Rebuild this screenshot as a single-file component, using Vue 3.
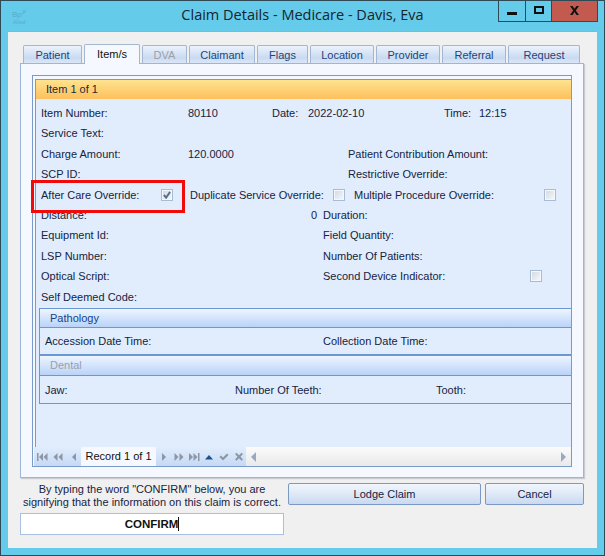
<script setup>
const tabs = [
  { name: 'Patient', w: 59 },
  { name: 'Item/s', w: 56, active: true },
  { name: 'DVA', w: 45, off: true },
  { name: 'Claimant', w: 66 },
  { name: 'Flags', w: 51 },
  { name: 'Location', w: 64 },
  { name: 'Provider', w: 64 },
  { name: 'Referral', w: 64 },
  { name: 'Request', w: 72 }
]

// iconos de la barra de navegacion
const navLeft = [
  { d: 'M0 1h1.500v8H0zM6 1v8L2 5zM10.500 1v8L6.500 5z', w: 11 },
  { d: 'M4.500 1v8L.5 5zM9.500 1v8L5.500 5z', w: 11 },
  { d: 'M7 1v8L3 5z', w: 8 }
]
const navRight = [
  { d: 'M1 1v8l4-4z', w: 8, c: '#8c96a6' },
  { d: 'M.5 1v8l4-4zM5.500 1v8l4-4z', w: 10, c: '#8c96a6' },
  { d: 'M0 1v8l4-4zM4.500 1v8l4-4zM9 1h1.500v8H9z', w: 11, c: '#8c96a6' },
  { d: 'M0 7.500 4 3l4 4.500z', w: 9, c: '#1f4f8f' },
  { d: 'M.5 5 2 3.500l2 2L8 1.500 9.500 3 4 8.500z', w: 10, c: '#8c96a6' },
  { d: 'M1 2 2.500.8 5 3.300 7.500.8 9 2 6.500 4.800 9 7.500 7.500 8.800 5 6.300 2.500 8.800 1 7.500 3.500 4.800z', w: 11, c: '#8c96a6' }
]
</script>

<template>
  <div class="ventana">
    <div class="titulo">
      <div class="logo">
        <svg width="10" height="8" viewBox="0 0 14 9"><path d="M2 8C5 7 6 4 6 1c1 2 3 2 6 1-2 1-3 2-4 4-1 1-3 2-6 2z" fill="#5aa9c4" /></svg>
        <span class="logo-bp">Bp</span>
        <span class="logo-allied">Allied</span>
      </div>
      <span class="titulo-texto">Claim Details - Medicare - Davis, Eva</span>
      <div class="caption">
        <div class="cap cap-min"><i></i></div>
        <div class="cap cap-max"><i></i></div>
        <div class="cap cap-close">
          <svg width="11" height="9" viewBox="0 0 11 9"><path d="M1 0h2.500L5.500 2.700 7.500 0H10L6.800 4.400 10 9H7.500L5.500 6.100 3.500 9H1L4.200 4.400z" fill="#111" /></svg>
        </div>
      </div>
    </div>

    <div class="cliente">
      <div class="tabs">
        <div
          v-for="t in tabs"
          :key="t.name"
          class="tab"
          :class="{ activa: t.active, apagada: t.off }"
          :style="{ width: t.w + 'px' }"
        >{{ t.name }}</div>
      </div>

      <div class="pagina">
        <div class="grupo">
          <div class="interior">
            <div class="item-head">Item 1 of 1</div>

            <div class="filas">
              <div class="fila f-item">
                <span>Item Number:</span><span>80110</span><span>Date:</span><span>2022-02-10</span><span>Time:</span><span>12:15</span>
              </div>
              <div class="fila"><span>Service Text:</span></div>
              <div class="fila f-carga">
                <span>Charge Amount:</span><span>120.0000</span><span>Patient Contribution Amount:</span>
              </div>
              <div class="fila f-scp"><span>SCP ID:</span><span>Restrictive Override:</span></div>
              <div class="fila f-over">
                <span>After Care Override:</span><span class="check"><svg width="8" height="8" viewBox="0 0 9 9"><path d="M1 4.500 3.500 7.500 8 1" fill="none" stroke="#5b6f8f" stroke-width="2.200" /></svg></span>
                <span>Duplicate Service Override:</span><span class="check"></span>
                <span>Multiple Procedure Override:</span><span class="check"></span>
                <div class="marca"></div>
              </div>
              <div class="fila f-dos"><span class="distancia"><span>Distance:</span><span>0</span></span><span>Duration:</span></div>
              <div class="fila f-dos"><span>Equipment Id:</span><span>Field Quantity:</span></div>
              <div class="fila f-dos"><span>LSP Number:</span><span>Number Of Patients:</span></div>
              <div class="fila f-optica"><span>Optical Script:</span><span>Second Device Indicator:</span><span class="check"></span></div>
              <div class="fila"><span>Self Deemed Code:</span></div>
            </div>

            <div class="sub">
              <div class="sub-head">Pathology</div>
              <div class="sub-body f-pato"><span>Accession Date Time:</span><span>Collection Date Time:</span></div>
              <div class="sub-head dental">Dental</div>
              <div class="sub-body f-dental"><span>Jaw:</span><span>Number Of Teeth:</span><span>Tooth:</span></div>
            </div>

            <div class="relleno"></div>

            <div class="nav">
              <div class="nav-botones">
                <svg v-for="n in navLeft" :key="n.d" class="nav-ico" :width="n.w" height="10" :viewBox="`0 0 ${n.w} 10`"><path :d="n.d" fill="#8c96a6" /></svg>
                <div class="record">Record 1 of 1</div>
                <svg v-for="n in navRight" :key="n.d" class="nav-ico" :width="n.w" height="10" :viewBox="`0 0 ${n.w} 10`"><path :d="n.d" :fill="n.c" /></svg>
              </div>
              <div class="scroll">
                <svg width="7" height="10" viewBox="0 0 7 10"><path d="M6 0v10L1 5z" fill="#9aa8c4" /></svg>
                <svg width="7" height="10" viewBox="0 0 7 10"><path d="M1 0v10l5-5z" fill="#9aa8c4" /></svg>
              </div>
            </div>
          </div>
        </div>
      </div>

      <div class="pie">
        <div class="confirmar">
          <p>By typing the word "CONFIRM" below, you are<br>signifying that the information on this claim is correct.</p>
          <div class="entrada"><b>CONFIRM</b><i class="cursor"></i></div>
        </div>
        <button class="boton">Lodge Claim</button>
        <button class="boton">Cancel</button>
      </div>
    </div>
  </div>
</template>

<style>
html, body { margin: 0; padding: 0; }
</style>

<style scoped>
.ventana { position: relative; box-sizing: border-box; width: 605px; height: 556px; background: #65cbea; border: 1px solid #2f4a56; padding: 0 7px 7px; display: flex; flex-direction: column; font-family: "Liberation Sans", "Noto Sans", sans-serif; font-size: 11px; color: #16233f; }

.titulo { height: 30px; flex: none; display: flex; align-items: center; justify-content: center; }
.titulo-texto { font-family: "Open Sans", sans-serif; font-size: 14.5px; color: #14252e; margin-top: -3px; }
.logo { position: absolute; left: 11px; top: 6px; width: 16px; height: 18px; opacity: .55; }
.logo svg { position: absolute; left: 7px; top: 1px; }
.logo-bp { position: absolute; left: 0; top: 3px; font-size: 8px; color: #4e94b3; }
.logo-allied { position: absolute; left: 1px; top: 12px; font-size: 5px; color: #4e94b3; }

.caption { position: absolute; top: -1px; right: 6px; display: flex; height: 22px; }
.cap { box-sizing: border-box; height: 22px; border: 1px solid #2f4a56; border-left: 0; display: flex; align-items: center; justify-content: center; }
.cap-min { width: 28px; border-left: 1px solid #2f4a56; }
.cap-min i { width: 10px; height: 3px; background: #111; margin-top: 4px; }
.cap-max { width: 26px; }
.cap-max i { box-sizing: border-box; width: 10px; height: 8px; border: 2px solid #111; margin-top: -2px; }
.cap-close { width: 46px; background: #c35a50; }
.cap-close svg { margin-top: -2px; }

.cliente { flex: 1; background: #f0f0f0; border-top: 1px solid #8fb0cf; padding: 11px 13px 0 12px; min-height: 0; display: flex; flex-direction: column; }

.tabs { display: flex; gap: 2px; height: 20px; padding-left: 3px; align-items: flex-end; }
.tab { box-sizing: border-box; height: 18px; border: 1px solid #a3b6d3; border-bottom: 0; border-radius: 2px 2px 0 0; background: linear-gradient(#ecf3fc, #c9daf1 70%, #dbe7f8); color: #1f4479; text-align: center; line-height: 18px; }
.tab.activa { height: 20px; background: #f5f8ff; color: #111; line-height: 18px; position: relative; margin-bottom: -1px; z-index: 1; }
.tab.apagada { color: #9a9fa8; }

.pagina { box-sizing: border-box; height: 415px; flex: none; background: #f5f8ff; border: 1px solid #9db6d8; box-shadow: 1px 1px 1px #c8cbd0; padding: 11px 11px 10px 11px; }
.grupo { box-sizing: border-box; height: 100%; border: 1px solid #7a9bc9; padding: 3px 0 0 2px; }
.interior { box-sizing: border-box; height: 100%; border: 1px solid #7a9bc9; border-width: 1px 0 0 1px; display: flex; flex-direction: column; }

.item-head { height: 19px; flex: none; box-sizing: border-box; background: linear-gradient(#ffe38f, #fcc05c); padding-left: 10px; line-height: 18px; color: #22283a; }

.filas { background: #e1edfd; padding: 3.9px 0 0 5px; flex: none; height: 209px; box-sizing: border-box; }
.fila { height: 20.4px; display: grid; align-items: center; white-space: nowrap; grid-template-columns: 1fr; position: relative; }
.f-item { grid-template-columns: 147px 84px 36px 136px 35px 1fr; }
.f-carga { grid-template-columns: 147px 160px 1fr; }
.f-scp { grid-template-columns: 307px 1fr; }
.f-over { grid-template-columns: 120px 29px 143px 21px 190px 1fr; }
.f-dos { grid-template-columns: 282px 1fr; }
.f-optica { grid-template-columns: 282px 207px 1fr; }
.distancia { display: flex; justify-content: space-between; padding-right: 6px; }

.check { box-sizing: border-box; width: 12px; height: 12px; border: 1px solid #a9bcd6; box-shadow: inset 0 0 0 1px #f4f7fb; background: linear-gradient(135deg, #d2d8e2, #f7f9fc); display: flex; align-items: center; justify-content: center; }
.marca { position: absolute; left: -10px; top: -4.500px; width: 154px; height: 33px; box-sizing: border-box; border: 3px solid #f00a0a; z-index: 2; }

.sub { background: #e1edfd; padding-left: 3px; flex: none; }
.sub-head { height: 20px; box-sizing: border-box; border: 1px solid #6a97d5; border-width: 1px 0 1px 1px; background: linear-gradient(#eef5ff, #b9d3f8); padding-left: 10px; line-height: 18px; color: #15428b; }
.sub-head.dental { color: #9a9fa8; border-top: 0; }
.sub-body { display: grid; align-items: center; box-sizing: border-box; border-left: 1px solid #6a97d5; border-bottom: 1px solid #6a97d5; padding-left: 5px; white-space: nowrap; }
.f-pato { height: 28px; border-bottom-width: 2px; grid-template-columns: 278px 1fr; }
.f-dental { height: 28px; grid-template-columns: 190px 201px 1fr; }

.relleno { flex: 1; background: #e1edfd; }

.nav { height: 19px; flex: none; display: flex; }
.nav-botones { width: 212px; margin-left: -2px; display: flex; align-items: center; gap: 5px; padding-left: 3px; box-sizing: border-box; background: linear-gradient(#e1edfd, #c5d9f5); }
.nav-ico { flex: none; }
.record { flex: none; width: 75px; height: 19px; margin-left: -1px; background: #f5f8ff; color: #111; text-align: center; line-height: 19px; white-space: nowrap; }
.scroll { flex: 1; display: flex; justify-content: space-between; align-items: center; padding: 0 4px; background: linear-gradient(#fbfbfb, #e9e9e9); }

.pie { display: grid; grid-template-columns: 264px 193px 99px; gap: 4px; align-items: start; padding-top: 5px; }
.confirmar p { margin: 0 0 4px; height: 26px; text-align: center; line-height: 13px; white-space: nowrap; }
.entrada { box-sizing: border-box; height: 22px; background: #fff; border: 1px solid #a9c0e0; display: flex; align-items: center; justify-content: center; color: #111; }
.entrada b { font-weight: 700; font-size: 11.500px; }
.cursor { width: 1px; height: 14px; background: #111; }
.boton { height: 22px; padding: 0; border: 1px solid #7c98c4; border-radius: 2px; background: linear-gradient(#f1f6fd, #dbe6f6 60%, #c9d9f0); font: inherit; color: #16233f; }
</style>
